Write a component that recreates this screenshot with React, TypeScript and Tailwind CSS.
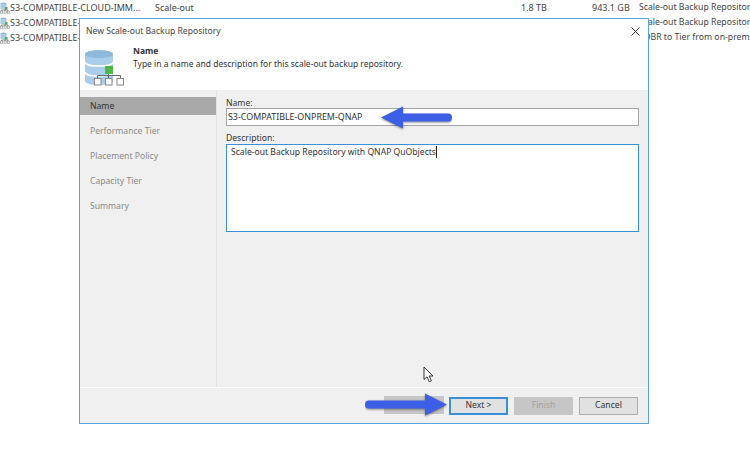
const font = { fontFamily: '"Noto Sans", sans-serif' };

function RowIcon() {
  return (
    <svg width="10" height="12" viewBox="0 0 10 12" className="shrink-0">
      <ellipse cx="3.5" cy="2" rx="3" ry="1.5" fill="#8fb8dc" />
      <rect x="0.5" y="2" width="6" height="5" fill="#a9cbe6" />
      <rect x="5" y="5" width="2.5" height="2.5" fill="#4caf50" />
      <path d="M1.5 9V8H8V9M5 7V9" stroke="#777" strokeWidth="0.8" fill="none" />
      <rect x="0.5" y="9" width="2.2" height="2.2" fill="#fff" stroke="#888" strokeWidth="0.6" />
      <rect x="4" y="9" width="2.2" height="2.2" fill="#fff" stroke="#888" strokeWidth="0.6" />
      <rect x="7.3" y="9" width="2.2" height="2.2" fill="#fff" stroke="#888" strokeWidth="0.6" />
    </svg>
  );
}

function BackRow({ name, type, cap, free, desc }: { name: string; type?: string; cap?: string; free?: string; desc: string }) {
  return (
    <div className="flex h-[15px] items-center whitespace-nowrap text-[9px] text-[#444]">
      <div className="flex w-[155px] shrink-0 items-center">
        <RowIcon />
        <span>{name}</span>
      </div>
      <span className="w-[366px] shrink-0">{type}</span>
      <span className="w-[71px] shrink-0">{cap}</span>
      <span className="w-[47px] shrink-0">{free}</span>
      <span className="text-[8.7px]">{desc}</span>
    </div>
  );
}

function Arrow({ className, flip, width }: { className: string; flip?: boolean; width: number }) {
  return (
    <svg width={width} height="26" viewBox={`0 0 ${width} 26`} className={className}>
      <g transform={flip ? `translate(${width} 0) scale(-1 1)` : undefined} style={{ filter: "drop-shadow(0 1px 1px rgba(0,0,0,.45))" }}>
        <path d={`M4 8.5H${width - 24}V1.5L${width - 2} 12.5L${width - 24} 23.5V16.5H4a4 4 0 0 1 0-8Z`} fill="#3d5fe6" />
      </g>
    </svg>
  );
}

function NavItem({ label, active }: { label: string; active?: boolean }) {
  return (
    <div className={`flex items-center pl-[10px] text-[8.6px] ${active ? "h-[18px] bg-[#a8a8a8] text-[#333]" : "h-[17px] text-[#8a8a8a]"}`}>
      {label}
    </div>
  );
}

function FootButton({ label, kind }: { label: string; kind?: "focus" | "off" | "plain" }) {
  const cls =
    kind === "focus"
      ? "border-2 border-[#3b8fd8] bg-[#e1e1e1] text-[#333]"
      : kind === "off"
        ? "border border-[#c6c6c6] bg-[#c6c6c6] text-[#a3a3a3]"
        : "border border-[#adadad] bg-[#e1e1e1] text-[#333]";
  return <div className={`flex h-[18px] w-[59px] items-center justify-center text-[8.6px] ${cls}`}>{label}</div>;
}

export default function App() {
  return (
    <div className="relative h-[459px] w-[750px] overflow-hidden bg-white" style={font}>
      <div className="flex flex-col">
        <BackRow name="S3-COMPATIBLE-CLOUD-IMM..." type="Scale-out" cap="1.8 TB" free="943.1 GB" desc="Scale-out Backup Repository" />
        <BackRow name="S3-COMPATIBLE-CLOUD" desc="Scale-out Backup Repository" />
        <BackRow name="S3-COMPATIBLE-ONPREM" desc="SOBR to Tier from on-premises" />
      </div>

      <div className="absolute left-[79px] top-[18px] flex h-[406px] w-[570px] flex-col border border-[#5aa5e0] bg-[#f0f0f0] text-[#333]">
        <div className="flex h-[71px] shrink-0 flex-col bg-white">
          <div className="flex h-[23px] shrink-0 items-center justify-between pl-[6px] pr-[8px] pt-[1px] text-[8.6px] text-[#444]">
            <span>New Scale-out Backup Repository</span>
            <svg width="9" height="9" viewBox="0 0 9 9">
              <path d="M.5.5l8 8M8.5.5l-8 8" stroke="#333" strokeWidth="1" />
            </svg>
          </div>
          <div className="flex items-start">
            <svg width="40" height="36" viewBox="0 0 40 36" className="ml-[5px] mt-[8px] shrink-0">
              <path d="M0 4v27c0 2.5 6 4 14 4s14-1.500 14-4V4Z" fill="#a9cdea" />
              <ellipse cx="14" cy="4" rx="14" ry="4" fill="#8fb9dc" />
              <path d="M0 12c0 2.500 6 4 14 4s14-1.500 14-4M0 22c0 2.500 6 4 14 4s14-1.500 14-4" stroke="#fff" strokeWidth="1.5" fill="none" />
              <rect x="20" y="16" width="8" height="8" fill="#4cb848" />
              <path d="M12.500 29v-3.500h23V29M23.500 24v4" stroke="#666" strokeWidth="1" fill="none" />
              <rect x="9.500" y="28.500" width="6.500" height="6.500" fill="#fff" stroke="#888" />
              <rect x="20.500" y="28.500" width="6.500" height="6.500" fill="#fff" stroke="#888" />
              <rect x="32" y="28.500" width="6.500" height="6.500" fill="#fff" stroke="#888" />
            </svg>
            <div className="pl-[8px] pt-[2px] text-[8.5px] leading-[13px] text-[#333]">
              <div className="font-bold">Name</div>
              <div>Type in a name and description for this scale-out backup repository.</div>
            </div>
          </div>
        </div>

        <div className="flex min-h-0 flex-1">
          <div className="flex w-[136px] shrink-0 flex-col gap-[8px] pt-[7px]">
            <NavItem label="Name" active />
            <NavItem label="Performance Tier" />
            <NavItem label="Placement Policy" />
            <NavItem label="Capacity Tier" />
            <NavItem label="Summary" />
          </div>
          <div className="flex-1 border-l border-[#e2e2e2] pl-[9px] pr-[9px] pt-[6px] text-[8.6px]">
            <div className="h-[12px] pt-[1px] leading-[12px]">Name:</div>
            <div className="flex h-[18px] items-center border border-[#a5a5a5] bg-white pl-[1px] text-[8.9px]">S3-COMPATIBLE-ONPREM-QNAP</div>
            <div className="mt-[6px] h-[12px] leading-[12px]">Description:</div>
            <div className="h-[88px] border border-[#3d8fd8] bg-white pl-[4px] pt-[1px]">
              Scale-out Backup Repository with QNAP QuObjects<span className="border-l border-[#222]"></span>
            </div>
          </div>
        </div>

        <div className="flex h-[36px] shrink-0 items-center justify-end gap-[6px] border-t border-[#fcfcfc] pr-[10px]">
          <FootButton label="Next >" kind="focus" />
          <FootButton label="Finish" kind="off" />
          <FootButton label="Cancel" />
        </div>
      </div>

      <div className="absolute left-[384px] top-[396px] h-[18px] w-[60px] bg-[#c6c6c6]"></div>
      <Arrow className="absolute left-[365px] top-[392px]" width={84} />
      <Arrow className="absolute left-[379px] top-[105px]" width={73} flip />
      <svg width="12" height="17" viewBox="0 0 12 17" className="absolute left-[423px] top-[366px]">
        <path d="M1 1V13.500L4 10.800L6.300 15.800L8.400 14.800L6.200 10H10Z" fill="#fff" stroke="#333" strokeWidth="1" />
      </svg>
    </div>
  );
}
